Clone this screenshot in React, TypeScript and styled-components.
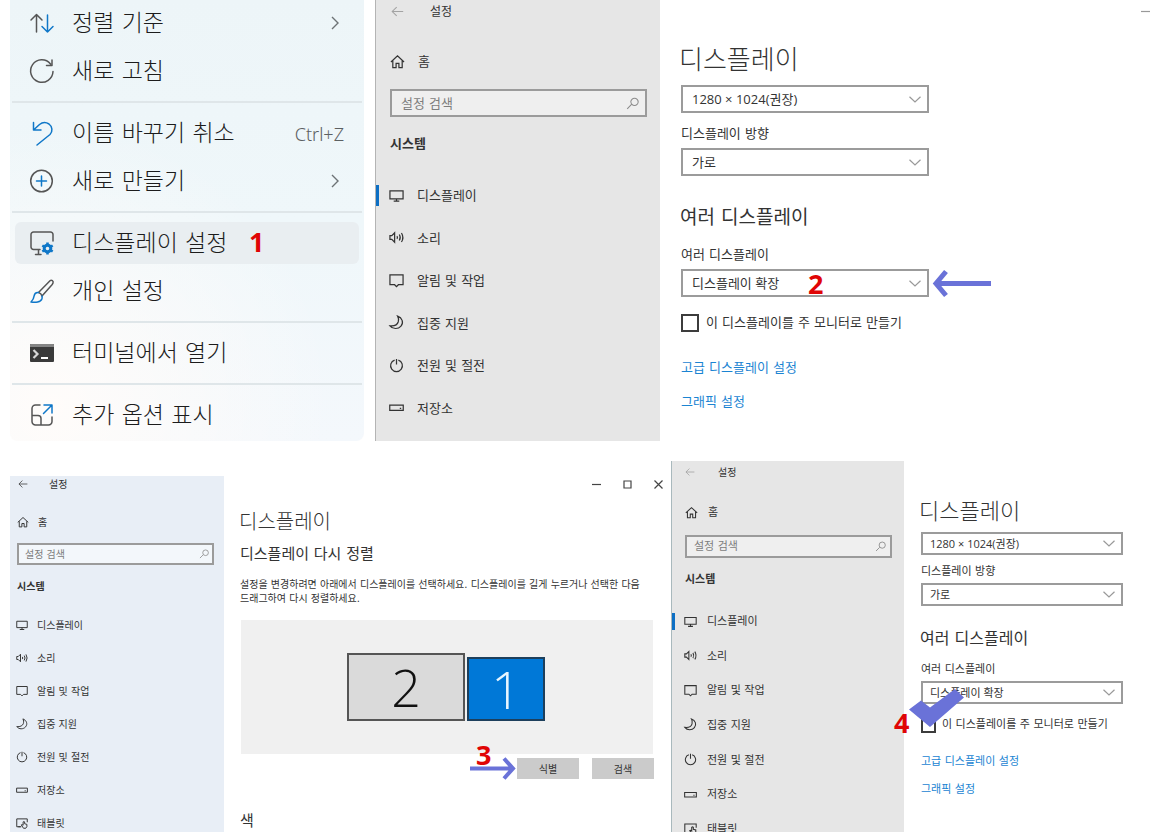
import React, { useId } from 'react';
import styled, { createGlobalStyle, ThemeProvider } from 'styled-components';

const korean = '"DejaVu Sans", "Noto Sans CJK KR", sans-serif';
const mixed = '"Open Sans", "Noto Sans CJK KR", sans-serif';

const GlobalStyle = createGlobalStyle`
  *, *::before, *::after { box-sizing: border-box; }
  body {
    margin: 0;
    background: #fff;
    color: #333;
    font-family: ${korean};
  }
  h1, h2, p, ul { margin: 0; padding: 0; font-weight: 400; }
  ul { list-style: none; }
  button, input, select { margin: 0; font-family: inherit; color: inherit; }
`;

/* ---------- window sizes ---------- */

const large = {
  height: 441, side: 285, sideBg: '#e6e6e6', edge: '#b4b4b4', fieldBg: '#efefef',
  text: 13, small: 12, line: 20, icon: 15,
  barPad: 16, barHeight: 22, barIcon: 13, barGap: 26, barFaded: true,
  homeTop: 24, homeHeight: 30, homeBottom: 13, homeGap: 13,
  sidePad: 14, field: 28, fieldPad: 9, headTop: 17, headBottom: 20,
  navHeight: 255, navGap: 13, mark: 21,
  pagePad: 21, pageTop: 40, title: 26, titleLine: 40, titleGap: 5, heading: 19, headingLine: 28,
  boxWidth: 248, labelTop: 11, labelGap: 4, headingTop: 27, groupTop: 14, tick: 18, tickTop: 16, tickGap: 7,
  linkTop: 25, linkGap: 14,
};

const medium = {
  height: 371, side: 233, sideBg: '#e6e6e6', edge: '#a9b9bd', fieldBg: '#efefef',
  text: 11, small: 10, line: 16, icon: 13,
  barPad: 14, barHeight: 22, barIcon: 10, barGap: 23, barFaded: true,
  homeTop: 17, homeHeight: 24, homeBottom: 11, homeGap: 10,
  sidePad: 13, field: 23, fieldPad: 7, headTop: 14, headBottom: 16,
  navHeight: 242, navGap: 10, mark: 17,
  pagePad: 17, pageTop: 35, title: 22, titleLine: 32, titleGap: 4, heading: 16, headingLine: 24,
  boxWidth: 202, labelTop: 9, labelGap: 3, headingTop: 21, groupTop: 11, tick: 15, tickTop: 13, tickGap: 6,
  linkTop: 21, linkGap: 12,
};

const compact = {
  ...medium,
  height: 356, side: 214, sideBg: '#e8eef6', edge: '#e8eef6', fieldBg: '#f3f7fb',
  text: 10, small: 10, line: 16, icon: 12,
  barPad: 8, barHeight: 16, barIcon: 10, barGap: 21, barFaded: false,
  homeTop: 18, homeHeight: 24, homeBottom: 9, homeGap: 9,
  sidePad: 6, field: 22, fieldPad: 6, headTop: 14, headBottom: 13,
  navHeight: 231, navGap: 9, mark: 16,
  pagePad: 17, title: 20, titleLine: 30, heading: 15, headingLine: 20,
};

/* ---------- page ---------- */

const Page = styled.main`
  display: flex;
  flex-direction: column;
  gap: 20px;
`;

const TopRow = styled.div`
  display: grid;
  grid-template-columns: 354px minmax(0, 1fr);
  gap: 11px;
  padding-left: 10px;
`;

const BottomRow = styled.div`
  display: grid;
  grid-template-columns: minmax(0, 661fr) minmax(0, 485fr);
  align-items: end;
  padding-left: 10px;
`;

/* ---------- context menu ---------- */

const MenuPanel = styled.nav`
  overflow: hidden;
  border-radius: 0 0 8px 8px;
  background:
    radial-gradient(circle at 12% 92%, #fffcfa 0%, rgba(255, 252, 250, 0) 55%),
    linear-gradient(180deg, #edf5f8 0%, #eff7fa 50%, #f4f8fc 100%);
`;

const MenuList = styled.ul`
  display: flex;
  flex-direction: column;
  margin-top: -1px;
  padding-bottom: 2px;
`;

const MenuItem = styled.li<{ $divided?: boolean }>`
  position: relative;
  padding: 3px 5px;
  ${(p) => p.$divided && `
    margin-top: 14px;
    &::before {
      content: '';
      position: absolute;
      top: -8px;
      left: 2px;
      right: 2px;
      height: 2px;
      background: #dfe6e9;
    }
  `}
`;

const MenuButton = styled.button<{ $active?: boolean }>`
  display: flex;
  align-items: center;
  gap: 18px;
  width: 100%;
  height: 42px;
  padding: 0 15px;
  border: 0;
  border-radius: 6px;
  background: ${(p) => (p.$active ? '#e9eef1' : 'transparent')};
  color: #1c1c1c;
  font-size: 23px;
  font-weight: 300;
  line-height: 32px;
  text-align: left;
`;

const MenuLabel = styled.span`
  flex: 1;
  white-space: nowrap;
`;

const Shortcut = styled.span`
  padding-top: 2px;
  color: #5c6062;
  font-family: "Noto Sans", sans-serif;
  font-size: 18px;
  font-weight: 300;
`;

const Svg = styled.svg`
  display: block;
  flex: none;
  fill: none;
  stroke: currentColor;
  overflow: visible;
`;

const blue = '#0f77c8';

const MenuIcon = ({ children }: { children: React.ReactNode }) => (
  <Svg width="24" height="24" viewBox="0 0 24 24" color="#555" strokeWidth="1.5" strokeLinecap="round" strokeLinejoin="round">
    {children}
  </Svg>
);

const SubArrow = () => (
  <Svg width="18" height="14" viewBox="0 0 18 14" strokeWidth="1.4" color="#6d7275">
    <path d="M6 1l6 6-6 6" />
  </Svg>
);

const Badge = styled.strong<{ $x: number; $y: number }>`
  position: absolute;
  left: ${(p) => p.$x}px;
  top: ${(p) => p.$y}px;
  color: #e00505;
  font-family: "Noto Sans", sans-serif;
  font-size: 27px;
  font-weight: 700;
  line-height: 28px;
`;

const SortIcon = () => (
  <MenuIcon>
    <path d="M6.500 21V3.500M1 9l5.500-5.500L12 9" />
    <path stroke={blue} d="M17.500 4v17M12 15.500l5.500 5.500 5.500-5.500" />
  </MenuIcon>
);
const RefreshIcon = () => (
  <MenuIcon>
    <path d="M23 12.500A11.200 11.200 0 1 1 20.500 5M22 1v5.500h-5.500" />
  </MenuIcon>
);
const UndoIcon = () => (
  <MenuIcon>
    <path stroke={blue} d="M3.500 1.500V9H11M3.500 9l6-5.500a8 8 0 0 1 9.500-.5a7 7 0 0 1 1 10.500L7 24" />
  </MenuIcon>
);
const NewIcon = () => (
  <MenuIcon>
    <circle cx="11.500" cy="12" r="10.800" />
    <path stroke={blue} d="M11.500 7v10M6.500 12h10" />
  </MenuIcon>
);
const DisplayGearIcon = () => (
  <MenuIcon>
    <path d="M10 18.500H3.500A2.500 2.500 0 0 1 1 16V3.500A2.500 2.500 0 0 1 3.500 1h17A2.500 2.500 0 0 1 23 3.500V10M8.500 18.500v4.500M5.500 23.500H11" />
    <g stroke={blue}>
      <circle cx="17.500" cy="17.500" r="3.300" strokeWidth="3" />
      <path strokeWidth="2.600" strokeLinecap="butt" d="M17.500 11.500v2.500M17.500 21v2.500M12.300 14.500l2.200 1.300M20.500 19.200l2.200 1.300M12.300 20.500l2.200-1.300M20.500 15.800l2.200-1.300" />
    </g>
  </MenuIcon>
);
const BrushIcon = () => (
  <MenuIcon>
    <path d="M8.500 13.500L20 1.800c1.500-1.300 3.800.2 3 2.200-.3.800-.6 1.200-1 1.700L12 17M8.500 13.500c1.800.5 3 1.700 3.500 3.500" />
    <path stroke={blue} d="M8.500 13.500c-2.500-.3-4 1-4.300 3.200-.3 2.400-1 4.300-3.200 6.300 4 .8 10 .5 11-3.500.2-1 .2-1.700 0-2.500" />
  </MenuIcon>
);
const TerminalIcon = () => (
  <MenuIcon>
    <rect x="0" y="3" width="24" height="18" rx="1" fill="#3a3a3a" stroke="none" />
    <path d="M0 4a1 1 0 0 1 1-1h22a1 1 0 0 1 1 1v2H0z" fill="#858585" stroke="none" />
    <path d="M3.500 9l4 4-4 4" stroke="#d8d8d8" strokeWidth="2.200" strokeLinecap="butt" strokeLinejoin="miter" />
    <path d="M11 17h7" stroke="#fff" strokeWidth="2" strokeLinecap="butt" />
  </MenuIcon>
);
const MoreIcon = () => (
  <MenuIcon>
    <path d="M10 2H5.500A3.500 3.500 0 0 0 2 5.500v13A3.500 3.500 0 0 0 5.500 22h13a3.500 3.500 0 0 0 3.500-3.500V14M2 12.500h6a3 3 0 0 1 3 3V22" />
    <path stroke={blue} d="M14 2h8v8M22 2l-8.500 8.500" />
  </MenuIcon>
);

const menuItems = [
  { label: '정렬 기준', icon: <SortIcon />, more: true },
  { label: '새로 고침', icon: <RefreshIcon /> },
  { label: '이름 바꾸기 취소', icon: <UndoIcon />, shortcut: 'Ctrl+Z', divided: true },
  { label: '새로 만들기', icon: <NewIcon />, more: true },
  { label: '디스플레이 설정', icon: <DisplayGearIcon />, divided: true, badge: '1' },
  { label: '개인 설정', icon: <BrushIcon /> },
  { label: '터미널에서 열기', icon: <TerminalIcon />, divided: true },
  { label: '추가 옵션 표시', icon: <MoreIcon />, divided: true },
];

const ContextMenu = () => (
  <MenuPanel>
    <MenuList>
      {menuItems.map((item) => (
        <MenuItem key={item.label} $divided={item.divided}>
          <MenuButton type="button" $active={!!item.badge}>
            {item.icon}
            <MenuLabel>{item.label}</MenuLabel>
            {item.shortcut && <Shortcut>{item.shortcut}</Shortcut>}
            {item.more && <SubArrow />}
          </MenuButton>
          {item.badge && <Badge $x={239} $y={9}>{item.badge}</Badge>}
        </MenuItem>
      ))}
    </MenuList>
  </MenuPanel>
);

/* ---------- settings window ---------- */

const Window = styled.section`
  display: flex;
  height: ${(p) => p.theme.height}px;
  overflow: hidden;
  background: #fff;
`;

const Sidebar = styled.aside`
  flex: none;
  width: ${(p) => p.theme.side}px;
  border-left: 1px solid ${(p) => p.theme.edge};
  background: ${(p) => p.theme.sideBg};
  font-size: ${(p) => p.theme.text}px;
  line-height: ${(p) => p.theme.line}px;
`;

const SideLabel = styled.span`
  padding-top: 2px;
`;

const TitleBar = styled.header`
  display: flex;
  align-items: center;
  gap: ${(p) => p.theme.barGap}px;
  height: ${(p) => p.theme.barHeight}px;
  padding-left: ${(p) => p.theme.barPad - 1}px;
  font-size: ${(p) => p.theme.small}px;
`;

const BackButton = styled.button`
  display: flex;
  padding: 0;
  border: 0;
  background: none;
  color: ${(p) => (p.theme.barFaded ? '#a3a3a3' : '#444')};
`;

const HomeLink = styled.a`
  display: flex;
  align-items: center;
  gap: ${(p) => p.theme.homeGap}px;
  height: ${(p) => p.theme.homeHeight}px;
  margin: ${(p) => `${p.theme.homeTop}px 0 ${p.theme.homeBottom}px ${p.theme.sidePad}px`};
  color: inherit;
  text-decoration: none;
`;

const SearchBox = styled.label`
  display: flex;
  align-items: center;
  height: ${(p) => p.theme.field}px;
  margin: 0 ${(p) => (p.theme.sidePad > 6 ? p.theme.sidePad - 1 : 10)}px 0 ${(p) => p.theme.sidePad}px;
  padding: 0 ${(p) => p.theme.fieldPad - 3}px 0 ${(p) => p.theme.fieldPad}px;
  border: 2px solid #9b9b9b;
  background: ${(p) => p.theme.fieldBg};
  color: #8b8b8b;
`;

const SearchInput = styled.input`
  flex: 1;
  min-width: 0;
  padding: 0;
  border: 0;
  outline: 0;
  background: none;
  font-size: ${(p) => p.theme.text}px;
  &::placeholder { color: #7d7d7d; opacity: 1; }
`;

const SideHeading = styled.h2`
  margin: ${(p) => `${p.theme.headTop}px 0 ${p.theme.headBottom}px ${p.theme.sidePad}px`};
  font-size: ${(p) => p.theme.text}px;
  font-weight: 700;
  line-height: ${(p) => p.theme.line}px;
`;

const NavList = styled.ul`
  display: grid;
  grid-auto-rows: 1fr;
  height: ${(p) => p.theme.navHeight}px;
`;

const NavLink = styled.a<{ $current?: boolean }>`
  position: relative;
  display: flex;
  align-items: center;
  gap: ${(p) => p.theme.navGap}px;
  height: 100%;
  padding-left: ${(p) => p.theme.sidePad - 1}px;
  color: inherit;
  text-decoration: none;
  ${(p) => p.$current && `
    &::before {
      content: '';
      position: absolute;
      left: 0;
      top: calc(50% - ${Math.floor(p.theme.mark / 2)}px);
      width: 3px;
      height: ${p.theme.mark}px;
      background: #0d6fc4;
    }
  `}
`;

const icons: Record<string, React.ReactNode> = {
  back: <path d="M15 8H1.500M7 2.500L1.500 8 7 13.500" />,
  home: <path d="M1 8.500L8 2l7 6.500M3 7v7.500h3.500V10h3v4.500H13V7" />,
  search: <path d="M6.800 9.200L1.500 14.500M6 6a4.500 4.500 0 1 0 9 0a4.500 4.500 0 1 0-9 0" />,
  display: <path d="M1 3h14v8.500H1zM8 11.500v2.500M5 14h6" />,
  sound: <path d="M1 6h2l3-3v10l-3-3H1zM8.500 6.500q1 1.500 0 3M11 4.800q2 3.200 0 6.400M13.300 3.200q3 4.800 0 9.600" />,
  notice: <path d="M1 2h14v10.500h-5L8 14.500l-2-2H1z" />,
  moon: <path d="M9.200 1.200C14 3 16 8 12.800 11.800 9.800 15.300 4 15.300 1 11.500 5.500 12 9 10.300 9.900 7.200 10.400 5.300 10.200 3 9.200 1.200z" />,
  power: <path d="M8 1v6M6 2.200a6.300 6.300 0 1 0 4 0" />,
  storage: <path d="M.8 5.500h14.400v5.500H.8zM11.500 9h1.500" />,
  tablet: <path d="M7 13H1V2.500h14V7M9 13.500L7 10.500q1-1 2.500.5V6.500q1-1 2 0V9l3 .8v3L13 15h-3zM3 13h3" />,
};

const Icon = ({ name, size }: { name: string; size: number }) => (
  <Svg width={size} height={size} viewBox="0 0 16 16" strokeWidth={1.3}>
    {icons[name]}
  </Svg>
);

const navItems = [
  ['display', '디스플레이'],
  ['sound', '소리'],
  ['notice', '알림 및 작업'],
  ['moon', '집중 지원'],
  ['power', '전원 및 절전'],
  ['storage', '저장소'],
  ['tablet', '태블릿'],
];

type Size = typeof large;

const SettingsSidebar = ({ size, count, current }: { size: Size; count: number; current?: boolean }) => (
  <Sidebar>
    <TitleBar>
      <BackButton type="button" aria-label="뒤로"><Icon name="back" size={size.barIcon} /></BackButton>
      <SideLabel>설정</SideLabel>
    </TitleBar>
    <HomeLink href="#home">
      <Icon name="home" size={size.icon} />
      <SideLabel>홈</SideLabel>
    </HomeLink>
    <SearchBox>
      <SearchInput type="text" placeholder="설정 검색" aria-label="설정 검색" />
      <Icon name="search" size={size.icon - 2} />
    </SearchBox>
    <SideHeading>시스템</SideHeading>
    <NavList>
      {navItems.slice(0, count).map(([icon, label], i) => (
        <li key={label}>
          <NavLink href={`#${icon}`} $current={current && i === 0}>
            <Icon name={icon} size={size.icon} />
            <SideLabel>{label}</SideLabel>
          </NavLink>
        </li>
      ))}
    </NavList>
  </Sidebar>
);

const Content = styled.div`
  position: relative;
  flex: 1;
  min-width: 0;
  padding: ${(p) => p.theme.pageTop}px 0 0 ${(p) => p.theme.pagePad}px;
  font-size: ${(p) => p.theme.text}px;
  line-height: ${(p) => p.theme.line}px;
`;

const Title = styled.h1`
  margin-left: -2px;
  font-size: ${(p) => p.theme.title}px;
  font-weight: 300;
  line-height: ${(p) => p.theme.titleLine}px;
`;

const Heading = styled.h2`
  margin-left: -1px;
  font-size: ${(p) => p.theme.heading}px;
  line-height: ${(p) => p.theme.headingLine}px;
`;

const Group = styled.div<{ $top: number }>`
  margin-top: ${(p) => p.$top}px;
`;

const FieldLabel = styled.label`
  display: block;
  margin-bottom: ${(p) => p.theme.labelGap}px;
`;

const SelectBox = styled.div`
  position: relative;
  display: flex;
  align-items: center;
  width: ${(p) => p.theme.boxWidth}px;
  max-width: 100%;
  & > svg {
    position: absolute;
    right: 8px;
    pointer-events: none;
    color: #999;
  }
`;

const Select = styled.select`
  appearance: none;
  width: 100%;
  height: ${(p) => p.theme.field}px;
  padding: 0 24px 0 ${(p) => p.theme.fieldPad}px;
  border: 2px solid #9b9b9b;
  border-radius: 0;
  background: #fff;
  font-family: ${mixed};
  font-size: ${(p) => p.theme.text}px;
`;

const TickRow = styled.label`
  display: flex;
  align-items: center;
  gap: ${(p) => p.theme.tickGap}px;
  height: ${(p) => p.theme.line}px;
  margin-top: ${(p) => p.theme.tickTop}px;
  white-space: nowrap;
`;

const Tick = styled.input`
  appearance: none;
  flex: none;
  width: ${(p) => p.theme.tick}px;
  height: ${(p) => p.theme.tick}px;
  margin: 0;
  border: 2px solid #3c3c3c;
  background: #fff;
`;

const Links = styled.div`
  display: flex;
  flex-direction: column;
  align-items: flex-start;
  gap: ${(p) => p.theme.linkGap}px;
  margin-top: ${(p) => p.theme.linkTop}px;
`;

const TextLink = styled.a`
  color: #1b84d2;
  text-decoration: none;
`;

const Overlay = styled.div<{ $x: number; $y: number }>`
  position: absolute;
  left: ${(p) => p.$x}px;
  top: ${(p) => p.$y}px;
`;

const WindowControl = styled.button`
  display: flex;
  padding: 0;
  border: 0;
  background: none;
  color: #444;
`;

const MinimizeCorner = styled(WindowControl)`
  position: absolute;
  top: 7px;
  right: 6px;
  color: #999;
`;

const Minimize = () => <Svg width="9" height="9" viewBox="0 0 9 9"><path d="M0 4.500h9" strokeWidth="1.200" /></Svg>;
const Maximize = () => <Svg width="9" height="9" viewBox="0 0 9 9"><path d="M1 1h7v7H1z" strokeWidth="1.200" /></Svg>;
const Close = () => <Svg width="9" height="9" viewBox="0 0 9 9"><path d="M.5.500l8 8M8.500.500l-8 8" strokeWidth="1.200" /></Svg>;

const Dropdown = ({ id, value, label }: { id: string; value: string; label?: string }) => (
  <SelectBox>
    <Select id={id} aria-label={label} defaultValue={value}>
      <option>{value}</option>
    </Select>
    <Svg width="12" height="7" viewBox="0 0 12 7" strokeWidth="1.200"><path d="M.5.800L6 6l5.500-5.200" /></Svg>
  </SelectBox>
);

const DisplayPage = ({ size, children }: { size: Size; children?: React.ReactNode }) => {
  const id = useId();
  return (
    <Content>
      <Title>디스플레이</Title>
      <Group $top={size.titleGap}>
        <Dropdown id={`${id}-resolution`} label="해상도" value="1280 × 1024(권장)" />
      </Group>
      <Group $top={size.labelTop}>
        <FieldLabel htmlFor={`${id}-direction`}>디스플레이 방향</FieldLabel>
        <Dropdown id={`${id}-direction`} value="가로" />
      </Group>
      <Group $top={size.headingTop}>
        <Heading>여러 디스플레이</Heading>
      </Group>
      <Group $top={size.groupTop}>
        <FieldLabel htmlFor={`${id}-multi`}>여러 디스플레이</FieldLabel>
        <Dropdown id={`${id}-multi`} value="디스플레이 확장" />
      </Group>
      <TickRow>
        <Tick type="checkbox" />
        이 디스플레이를 주 모니터로 만들기
      </TickRow>
      <Links>
        <TextLink href="#advanced">고급 디스플레이 설정</TextLink>
        <TextLink href="#graphics">그래픽 설정</TextLink>
      </Links>
      {children}
    </Content>
  );
};

/* ---------- arrange page ---------- */

const ArrangeContent = styled(Content)`
  padding-top: 0;
  padding-right: 18px;
`;

const Controls = styled.div`
  display: flex;
  justify-content: flex-end;
  align-items: center;
  gap: 22px;
  height: 16px;
  margin: 0 -10px 15px 0;
`;

const Description = styled.p`
  margin: 14px -1px 14px;
  line-height: 14px;
  word-break: keep-all;
`;

const ArrangeArea = styled.div`
  display: flex;
  align-items: flex-end;
  justify-content: center;
  gap: 2px;
  height: 134px;
  padding-bottom: 33px;
  padding-right: 2px;
  background: #f0f0f0;
`;

const Monitor = styled.button<{ $primary?: boolean }>`
  display: flex;
  align-items: center;
  justify-content: center;
  width: ${(p) => (p.$primary ? 78 : 118)}px;
  height: ${(p) => (p.$primary ? 64 : 68)}px;
  padding: 0;
  border: 2px solid ${(p) => (p.$primary ? '#1d3f5c' : '#555')};
  background: ${(p) => (p.$primary ? '#0078d7' : '#dadada')};
  color: ${(p) => (p.$primary ? '#e8f6ff' : '#111')};
  font-family: "Open Sans", sans-serif;
  font-size: 52px;
  font-weight: 300;
  line-height: 60px;
`;

const Actions = styled.div`
  position: relative;
  display: flex;
  justify-content: flex-end;
  gap: 13px;
  margin: 4px -1px 32px 0;
`;

const ActionButton = styled.button`
  width: 62px;
  height: 21px;
  padding: 0;
  border: 0;
  background: #cbcbcb;
  font-size: 10px;
`;

const ActionOverlay = styled.div`
  position: absolute;
  right: 139px;
  top: -1px;
`;

const marker = '#6a72d8';

const ArrangePage = () => (
  <ArrangeContent>
    <Controls>
      <WindowControl type="button" aria-label="최소화"><Minimize /></WindowControl>
      <WindowControl type="button" aria-label="최대화"><Maximize /></WindowControl>
      <WindowControl type="button" aria-label="닫기"><Close /></WindowControl>
    </Controls>
    <Title>디스플레이</Title>
    <Group $top={7}>
      <Heading>디스플레이 다시 정렬</Heading>
    </Group>
    <Description>
      설정을 변경하려면 아래에서 디스플레이를 선택하세요. 디스플레이를 길게 누르거나 선택한 다음
      <br />
      드래그하여 다시 정렬하세요.
    </Description>
    <ArrangeArea>
      <Monitor type="button">2</Monitor>
      <Monitor type="button" $primary>1</Monitor>
    </ArrangeArea>
    <Actions>
      <ActionOverlay>
        <Svg width="45" height="23" viewBox="0 0 45 23" stroke={marker} strokeWidth="4">
          <path d="M0 11.500h42M34 1.500l9 10-9 10" stroke={marker} />
        </Svg>
        <Badge $x={6} $y={-16}>3</Badge>
      </ActionOverlay>
      <ActionButton type="button">식별</ActionButton>
      <ActionButton type="button">검색</ActionButton>
    </Actions>
    <Heading>색</Heading>
  </ArrangeContent>
);

export default function App() {
  return (
    <Page>
      <GlobalStyle />
      <TopRow>
        <ContextMenu />
        <ThemeProvider theme={large}>
          <Window>
            <SettingsSidebar size={large} count={6} current />
            <DisplayPage size={large}>
              <MinimizeCorner type="button" aria-label="최소화"><Minimize /></MinimizeCorner>
              <Badge $x={148} $y={270}>2</Badge>
              <Overlay $x={273} $y={270}>
                <Svg width="58" height="27" viewBox="0 0 58 27" strokeWidth="5">
                  <path d="M58 13.500H4M13 1.500L3 13.500l10 12" stroke={marker} />
                </Svg>
              </Overlay>
            </DisplayPage>
          </Window>
        </ThemeProvider>
      </TopRow>
      <BottomRow>
        <ThemeProvider theme={compact}>
          <Window>
            <SettingsSidebar size={compact} count={7} />
            <ArrangePage />
          </Window>
        </ThemeProvider>
        <ThemeProvider theme={medium}>
          <Window>
            <SettingsSidebar size={medium} count={7} current />
            <DisplayPage size={medium}>
              <Overlay $x={5} $y={228}>
                <Svg width="55" height="38" viewBox="0 0 55 38">
                  <path d="M0 20.500L12 11.500l9 7L46 0l9 8.500L21 38z" fill={marker} stroke="none" />
                </Svg>
              </Overlay>
              <Badge $x={-10} $y={248}>4</Badge>
            </DisplayPage>
          </Window>
        </ThemeProvider>
      </BottomRow>
    </Page>
  );
}
